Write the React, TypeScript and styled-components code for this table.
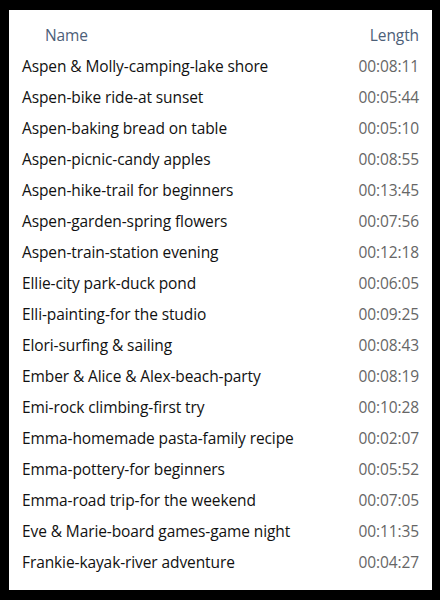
import styled, { createGlobalStyle } from "styled-components";

const Global = createGlobalStyle`
  html, body {
    margin: 0;
    padding: 0;
    background: #000;
  }
  body {
    font-family: "Open Sans", "Noto Sans", "Liberation Sans", sans-serif;
  }
`;

const Page = styled.div`
  width: 440px;
  height: 600px;
  padding: 10px 8px 10px 9px;
  box-sizing: border-box;
  background: #000;
`;

const Panel = styled.div`
  width: 100%;
  height: 100%;
  background: #fff;
  display: flex;
  flex-direction: column;
  padding: 9px 13px 0 13px;
  box-sizing: border-box;
`;

const Row = styled.div<{ $header?: boolean }>`
  display: flex;
  align-items: center;
  justify-content: space-between;
  height: 31.05px;
  font-size: 15.5px;
  letter-spacing: -0.1px;
  color: ${(p) => (p.$header ? "#4d6078" : "#111")};
  padding-left: ${(p) => (p.$header ? "23px" : "0")};
`;

const Name = styled.span`
  white-space: nowrap;
`;

const Length = styled.span<{ $header?: boolean }>`
  color: ${(p) => (p.$header ? "#4d6078" : "#666")};
  font-variant-numeric: tabular-nums;
`;

const clips: [string, string][] = [
  ["Aspen & Molly-camping-lake shore", "00:08:11"],
  ["Aspen-bike ride-at sunset", "00:05:44"],
  ["Aspen-baking bread on table", "00:05:10"],
  ["Aspen-picnic-candy apples", "00:08:55"],
  ["Aspen-hike-trail for beginners", "00:13:45"],
  ["Aspen-garden-spring flowers", "00:07:56"],
  ["Aspen-train-station evening", "00:12:18"],
  ["Ellie-city park-duck pond", "00:06:05"],
  ["Elli-painting-for the studio", "00:09:25"],
  ["Elori-surfing & sailing", "00:08:43"],
  ["Ember & Alice & Alex-beach-party", "00:08:19"],
  ["Emi-rock climbing-first try", "00:10:28"],
  ["Emma-homemade pasta-family recipe", "00:02:07"],
  ["Emma-pottery-for beginners", "00:05:52"],
  ["Emma-road trip-for the weekend", "00:07:05"],
  ["Eve & Marie-board games-game night", "00:11:35"],
  ["Frankie-kayak-river adventure", "00:04:27"],
];

export default function App() {
  return (
    <>
      <Global />
      <Page>
        <Panel>
          <Row $header>
            <Name>Name</Name>
            <Length $header>Length</Length>
          </Row>
          {clips.map(([name, len]) => (
            <Row key={name}>
              <Name>{name}</Name>
              <Length>{len}</Length>
            </Row>
          ))}
        </Panel>
      </Page>
    </>
  );
}
